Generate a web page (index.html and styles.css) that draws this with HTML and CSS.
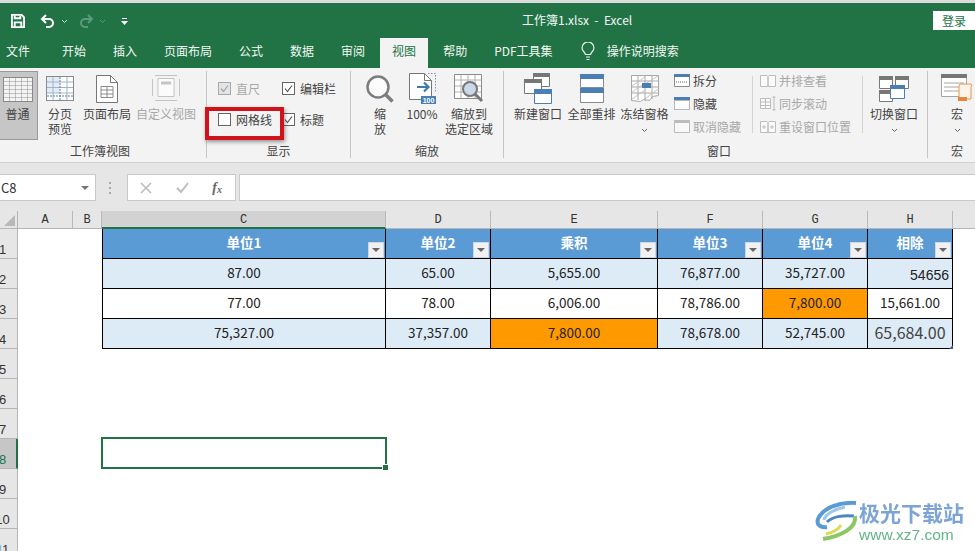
FILE: index.html
```html
<!DOCTYPE html>
<html lang="zh-CN">
<head>
  <meta charset="UTF-8">
  <title>工作簿1.xlsx - Excel</title>
  <link rel="stylesheet" href="styles.css">
</head>
<body>
  <div class="app">
    <!-- title bar -->
    <header class="titlebar">
      <div class="qat">
        <svg class="qat-save" width="14" height="14" viewBox="0 0 15 15" fill="none" stroke="#fff" stroke-width="2"><path d="M1 1h10.500l2.500 2.500V14H1z"/><path d="M4 1.500v3h6v-3M4 14V9h7v5"/></svg>
        <svg class="qat-undo" width="15" height="14" viewBox="0 0 15 14" fill="none" stroke="#fff" stroke-width="2"><path d="M6 1 2 5l4 4"/><path d="M2 5h7a4 4 0 0 1 0 8H6"/></svg>
        <svg class="qat-chev" width="5" height="3" viewBox="0 0 5 3" fill="none" stroke="#d5e5db"><path d="M0 0l2.500 2.500L5 0"/></svg>
        <svg class="qat-redo" width="15" height="14" viewBox="0 0 15 14" fill="none" stroke="#5c9a7b" stroke-width="2"><path d="M9 1l4 4-4 4"/><path d="M13 5H6a4 4 0 0 0 0 8h3"/></svg>
        <svg class="qat-chev2" width="5" height="3" viewBox="0 0 5 3" fill="none" stroke="#5c9a7b"><path d="M0 0l2.500 2.500L5 0"/></svg>
        <svg class="qat-more" width="7" height="7" viewBox="0 0 7 7" fill="#fff"><path d="M1 0h5v1H1zM0 3h7L3.500 7z"/></svg>
      </div>
      <div class="doc-title">工作簿1.xlsx&nbsp; -&nbsp; Excel</div>
      <div class="login">登录</div>
    </header>

    <!-- tabs -->
    <nav class="tabs">
      <span class="tab first">文件</span>
      <span class="tab">开始</span>
      <span class="tab">插入</span>
      <span class="tab">页面布局</span>
      <span class="tab">公式</span>
      <span class="tab">数据</span>
      <span class="tab">审阅</span>
      <span class="tab active">视图</span>
      <span class="tab">帮助</span>
      <span class="tab">PDF工具集</span>
      <svg class="bulb" width="14" height="19" viewBox="0 0 14 19" fill="none" stroke="#e8f0eb" stroke-width="1.200"><path d="M4.500 12.500C4 10 1 9 1 6a6 6 0 0 1 12 0c0 3-3 4-3.500 6.500z"/><path d="M5 15h4M5.500 17.500h3"/></svg>
      <span class="tab search">操作说明搜索</span>
    </nav>

    <!-- ribbon -->
    <section class="ribbon">
      <div class="group g-views">
        <div class="group-main">
          <div class="btn btn-normal w44">
            <div class="btn-icon">
              <svg width="30" height="25" viewBox="0 0 30 25"><defs><pattern id="cellgrid" width="6" height="4" patternUnits="userSpaceOnUse"><path d="M6 0H0V4" fill="none" stroke="#8f8f8f" stroke-width="1"/></pattern></defs><rect width="30" height="25" fill="#f4f4f4"/><rect width="30" height="25" fill="url(#cellgrid)"/><rect x=".5" y=".5" width="29" height="24" fill="none" stroke="#8a8a8a"/></svg>
            </div>
            <div class="btn-text">普通</div>
          </div>
          <div class="btn w44">
            <div class="btn-icon">
              <svg width="28" height="25" viewBox="0 0 28 25"><rect x=".5" y=".5" width="27" height="24" fill="#fff" stroke="#8a8a8a"/><path d="M1 1h13v16H1z" fill="#e3ecf6"/><path d="M1 6h26M1 11.500h26M1 17h26M7 1v23M21 1v23" stroke="#9fb2c8" fill="none"/><path d="M14 1v23M1 20h26" stroke="#5a7ea6" stroke-dasharray="2 1" fill="none"/></svg>
            </div>
            <div class="btn-text">分页<br>预览</div>
          </div>
          <div class="btn w50">
            <div class="btn-icon">
              <svg width="22" height="28" viewBox="0 0 22 28" fill="none" stroke="#777"><path d="M.5.500h14l7 7v20H.5z" fill="#fff"/><path d="M14.500.500v7h7"/><path d="M5 11.500h12v11H5zM5 15h12M5 19h12M11 11.500v11" stroke="#8a8a8a"/></svg>
            </div>
            <div class="btn-text">页面布局</div>
          </div>
          <div class="btn w68 off">
            <div class="btn-icon">
              <svg width="28" height="27" viewBox="0 0 28 27" fill="none" stroke="#c4c4c4"><path d="M6 3.500h16v18H6z" fill="#fbfbfb"/><path d="M9 8h10" stroke-width="3"/><path d="M.5 4v17M27.500 4v17M3 .5h22M3 25.500h22"/></svg>
            </div>
            <div class="btn-text">自定义视图</div>
          </div>
        </div>
        <div class="group-label">工作簿视图</div>
      </div>

      <div class="group g-show">
        <div class="group-main checks">
          <label class="check off"><span class="box on"><svg width="11" height="11" viewBox="0 0 11 11" fill="none" stroke="#a5a5a5" stroke-width="1.200"><path d="M2 5.500l2.500 3L9 2.500"/></svg></span>直尺</label>
          <label class="check"><span class="box"><svg width="11" height="11" viewBox="0 0 11 11" fill="none" stroke="#555" stroke-width="1.100"><path d="M2 5.500l2.500 3L9 2.500"/></svg></span>编辑栏</label>
          <label class="check"><span class="box"></span>网格线</label>
          <label class="check"><span class="box"><svg width="11" height="11" viewBox="0 0 11 11" fill="none" stroke="#555" stroke-width="1.100"><path d="M2 5.500l2.500 3L9 2.500"/></svg></span>标题</label>
        </div>
        <div class="group-label">显示</div>
        <div class="red-mark"></div>
      </div>

      <div class="group g-zoom">
        <div class="group-main">
          <div class="btn w34">
            <div class="btn-icon">
              <svg width="28" height="28" viewBox="0 0 28 28" fill="none"><circle cx="12" cy="12" r="10.500" fill="#fcfcfc" stroke="#7d7d7d" stroke-width="2.500"/><path d="M19.500 19.500l7 7" stroke="#7d7d7d" stroke-width="3.500"/></svg>
            </div>
            <div class="btn-text">缩<br>放</div>
          </div>
          <div class="btn w50">
            <div class="btn-icon">
              <svg width="27" height="31" viewBox="0 0 27 31" fill="none"><path d="M.5.500h15l7 7v19H.5z" fill="#fff" stroke="#777"/><path d="M15.500.500v7h7" stroke="#777"/><path d="M19 .5h7.500v18" stroke="#7a98ba" stroke-dasharray="1.500 1.500"/><path d="M8 14h11M15 9.500l4.500 4.500-4.500 4.500" stroke="#3f78b0" stroke-width="2.200"/><rect x="12" y="23" width="15" height="8" fill="#4a7fb5"/><text x="19.500" y="30" class="badge">100</text></svg>
            </div>
            <div class="btn-text">100%</div>
          </div>
          <div class="btn w44">
            <div class="btn-icon">
              <svg width="30" height="29" viewBox="0 0 30 29" fill="none"><path d="M.5.500h27v24H.5z" fill="#fff" stroke="#8a8a8a"/><path d="M1 6h26M1 12h26M1 18h26M7 1v23M14 1v23M21 1v23" stroke="#b0b0b0"/><circle cx="16" cy="15" r="7" fill="#c9d9ea" stroke="#777" stroke-width="2"/><path d="M21 20l7 7" stroke="#777" stroke-width="3"/></svg>
            </div>
            <div class="btn-text">缩放到<br>选定区域</div>
          </div>
        </div>
        <div class="group-label">缩放</div>
      </div>

      <div class="group g-window">
        <div class="group-main">
          <div class="btn w54">
            <div class="btn-icon">
              <svg width="28" height="31" viewBox="0 0 28 31" fill="none" stroke="#777"><path d="M9.500.500h16v13h-16z" fill="#fff"/><path d="M9 0h17v4H9z" fill="#777" stroke="none"/><path d="M.5 6.500h17v14H.5z" fill="#fff"/><path d="M0 6h18v4H0z" fill="#777" stroke="none"/><path d="M10.500 16.500h17v14h-17z" fill="#fff" stroke="#4a7fb5"/><path d="M10 16h18v5H10z" fill="#4a7fb5" stroke="none"/></svg>
            </div>
            <div class="btn-text">新建窗口</div>
          </div>
          <div class="btn w53">
            <div class="btn-icon">
              <svg width="24" height="29" viewBox="0 0 24 29" fill="none" stroke="#8a8a8a"><path d="M.5.500h23v13H.5zM.5 15.500h23v13H.5z" fill="#fff"/><path d="M0 0h24v5H0zM0 14h24v5H0z" fill="#4a7fb5" stroke="none"/></svg>
            </div>
            <div class="btn-text">全部重排</div>
          </div>
          <div class="btn w53">
            <div class="btn-icon">
              <svg width="28" height="27" viewBox="0 0 28 27" fill="none" stroke="#a9a9a9"><path d="M.5.500h27v20l-6 1-3 4-6-1-3 2-9-1z" fill="#fff"/><path d="M1 6h26M1 12h26M1 18h26M7 1v24M14 1v25M21 1v23"/><path d="M1 11L14 2M1 17l13-9M14 9l13-8M14 24L27 14M1 24l13-9" stroke="#c4c4c4"/><path d="M11 8h9v5h-9z" fill="#4a7fb5" stroke="none"/></svg>
            </div>
            <div class="btn-text">冻结窗格</div>
            <svg class="chev" width="5" height="3" viewBox="0 0 5 3" fill="none" stroke="#666"><path d="M0 0l2.500 2.500L5 0"/></svg>
          </div>
          <div class="small-col sc-1">
            <div class="small"><svg width="16" height="13" viewBox="0 0 16 13" fill="none" stroke="#8a8a8a"><path d="M.5.500h15v12H.5z" fill="#fff"/><path d="M0 0h16v3H0z" fill="#4a7fb5" stroke="none"/><path d="M2 8h12" stroke="#666" stroke-dasharray="1 1"/></svg>拆分</div>
            <div class="small"><svg width="16" height="13" viewBox="0 0 16 13" fill="none"><path d="M.5 3.500h15v9H.5z" fill="#fff" stroke="#777" stroke-dasharray="1 1"/><path d="M0 0h16v3H0z" fill="#4a7fb5"/></svg>隐藏</div>
            <div class="small off"><svg width="16" height="13" viewBox="0 0 16 13" fill="none" stroke="#bcbcbc"><path d="M.5.500h15v12H.5z" fill="#f8f8f8"/><path d="M0 0h16v3H0z" fill="#bcbcbc" stroke="none"/></svg>取消隐藏</div>
          </div>
          <i class="vsep"></i>
          <div class="small-col sc-2 off">
            <div class="small"><svg width="16" height="13" viewBox="0 0 16 13" fill="none" stroke="#bcbcbc"><path d="M.5 1.500h6.500l1 1v10H.5zM8 2.500l1-1h6.500v11H8z" fill="#fbfbfb"/></svg>并排查看</div>
            <div class="small"><svg width="16" height="15" viewBox="0 0 16 15" fill="none" stroke="#bcbcbc"><path d="M.5 2.500h10v10H.5zM5.500 2.500v10M.5 6h10M.5 9.500h10" fill="#fbfbfb"/><path d="M14 0v15M12.500 2L14 .5 15.500 2M12.500 13l1.500 1.500 1.500-1.500"/></svg>同步滚动</div>
            <div class="small"><svg width="16" height="13" viewBox="0 0 16 13" fill="none" stroke="#bcbcbc"><path d="M.5 1.500h6.500l1 1v10H.5zM8 2.500l1-1h6.500v11H8z" fill="#fbfbfb"/><path d="M2 7h4M4 5v4M10 7h4M12 5v4"/></svg>重设窗口位置</div>
          </div>
          <i class="vsep"></i>
          <div class="btn w62">
            <div class="btn-icon">
              <svg width="30" height="26" viewBox="0 0 30 26" fill="none" stroke="#777"><path d="M.5.500h13v12H.5zM16.500.500h13v12h-13zM.5 14.500h13v11H.5z" fill="#fff"/><path d="M0 0h14v4H0zM16 0h14v4H16zM0 14h14v4H0z" fill="#777" stroke="none"/><path d="M11.500 9.500h14v13h-14z" fill="#fff" stroke="#4a7fb5"/><path d="M11 9h15v4H11z" fill="#4a7fb5" stroke="none"/></svg>
            </div>
            <div class="btn-text">切换窗口</div>
            <svg class="chev" width="5" height="3" viewBox="0 0 5 3" fill="none" stroke="#666"><path d="M0 0l2.500 2.500L5 0"/></svg>
          </div>
        </div>
        <div class="group-label">窗口</div>
      </div>

      <div class="group g-macro">
        <div class="group-main">
          <div class="btn w58">
            <div class="btn-icon">
              <svg width="32" height="30" viewBox="0 0 32 30" fill="none" stroke="#a5a5a5"><path d="M.5.500h25v22H.5z" fill="#fff"/><path d="M0 0h26v4H0z" fill="#777" stroke="none"/><path d="M3 9h20M3 13h20M3 17h20"/><path d="M18 24V12a2 2 0 0 1 2-2h10a2 2 0 0 1 0 3v12h-10z" fill="#fdf3e8" stroke="#e8964a"/><path d="M17 23h9v4h-9z" fill="#e8833a" stroke="none"/></svg>
            </div>
            <div class="btn-text">宏</div>
            <svg class="chev" width="5" height="3" viewBox="0 0 5 3" fill="none" stroke="#666"><path d="M0 0l2.500 2.500L5 0"/></svg>
          </div>
        </div>
        <div class="group-label">宏</div>
      </div>
    </section>

    <!-- formula bar -->
    <section class="formula">
      <div class="namebox">
        <span>C8</span>
        <i class="tri"></i>
      </div>
      <div class="dots"></div>
      <div class="fx-box">
        <svg width="12" height="12" viewBox="0 0 12 12" fill="none" stroke="#bdbdbd" stroke-width="1.600"><path d="M1 1l10 10M11 1L1 11"/></svg>
        <svg width="13" height="11" viewBox="0 0 13 11" fill="none" stroke="#bdbdbd" stroke-width="2"><path d="M1 6l4 4 7-9"/></svg>
        <span class="fx">f<sub>x</sub></span>
      </div>
      <div class="fx-input"></div>
    </section>

    <!-- sheet -->
    <main class="sheet">
      <div class="corner"><i></i></div>
      <div class="col">A</div>
      <div class="col">B</div>
      <div class="col sel-col">C</div>
      <div class="col">D</div>
      <div class="col">E</div>
      <div class="col">F</div>
      <div class="col">G</div>
      <div class="col">H</div>
      <div class="col end"></div>

      <div class="row-num">1</div>
      <div class="cell head from-c">单位1<i class="filter"></i></div>
      <div class="cell head">单位2<i class="filter"></i></div>
      <div class="cell head">乘积<i class="filter"></i></div>
      <div class="cell head">单位3<i class="filter"></i></div>
      <div class="cell head">单位4<i class="filter"></i></div>
      <div class="cell head">相除<i class="filter"></i></div>

      <div class="row-num">2</div>
      <div class="cell tint from-c">87.00</div>
      <div class="cell tint">65.00</div>
      <div class="cell tint">5,655.00</div>
      <div class="cell tint">76,877.00</div>
      <div class="cell tint">35,727.00</div>
      <div class="cell tint plain">54656</div>

      <div class="row-num">3</div>
      <div class="cell from-c">77.00</div>
      <div class="cell">78.00</div>
      <div class="cell">6,006.00</div>
      <div class="cell">78,786.00</div>
      <div class="cell orange">7,800.00</div>
      <div class="cell">15,661.00</div>

      <div class="row-num">4</div>
      <div class="cell tint from-c">75,327.00</div>
      <div class="cell tint">37,357.00</div>
      <div class="cell orange">7,800.00</div>
      <div class="cell tint">78,678.00</div>
      <div class="cell tint">52,745.00</div>
      <div class="cell tint big">65,684.00</div>

      <div class="row-num">5</div>
      <div class="row-num">6</div>
      <div class="row-num">7</div>
      <div class="row-num sel-row">8</div>
      <div class="selection"><i></i></div>
      <div class="row-num">9</div>
      <div class="row-num">10</div>
      <div class="row-num">11</div>
    </main>

    <!-- watermark -->
    <div class="watermark">
      <svg width="44" height="40" viewBox="0 0 44 40" fill="none">
        <path d="M41 2C26 1 8 6 3 18c-2 6 3 9 9 8" stroke="#5b9bd5" stroke-width="4"/>
        <path d="M30 6C20 8 10 13 9 19" stroke="#9cc9e8" stroke-width="3"/>
        <path d="M12 21c6-6 18-7 27-6" stroke="#4a86c5" stroke-width="3"/>
        <path d="M40 15c2 12-14 20-32 23" stroke="#8cc665" stroke-width="4"/>
        <path d="M26 24c-3 5-10 8-15 9" stroke="#d9dc5a" stroke-width="3"/>
      </svg>
      <div class="wm-text">
        <div class="wm-cn">极光下载站</div>
        <div class="wm-url">www.xz7.com</div>
      </div>
    </div>
  </div>
</body>
</html>
```

FILE: styles.css
```css
* {
  box-sizing: border-box;
}
html, body {
  margin: 0;
  height: 100%;
  overflow: hidden;
}
body {
  font-family: "Noto Sans CJK SC", "Noto Sans", sans-serif;
  font-size: 12px;
  color: #444;
  background: #fff;
}
.app {
  position: relative;
  width: 975px;
  height: 551px;
  overflow: hidden;
}

/* title bar */
.titlebar {
  height: 38px;
  border-top: 3px solid #dcdcdc;
  background: #217346;
  color: #fff;
  display: flex;
  align-items: center;
  position: relative;
}
.qat {
  display: flex;
  align-items: center;
  padding-left: 11px;
  margin-top: 1px;
}
.qat-undo { margin-left: 15px; }
.qat-chev { margin-left: 7px; }
.qat-redo { margin-left: 12px; }
.qat-chev2 { margin-left: 6px; }
.qat-more { margin-left: 16px; }
.doc-title {
  position: absolute;
  left: 522px;
  top: 7px;
  line-height: 20px;
  color: #f2f7f4;
}
.login {
  margin-left: auto;
  margin-top: -1px;
  width: 42px;
  height: 19px;
  line-height: 19px;
  text-align: center;
  background: #fff;
  color: #217346;
}

/* tabs */
.tabs {
  height: 30px;
  background: #217346;
  color: #f2f7f4;
  display: flex;
  align-items: stretch;
}
.tab {
  padding: 0 12px;
  margin-right: 3px;
  line-height: 25px;
}
.tab.first {
  padding-left: 6px;
  margin-right: 8px;
}
.tab.active {
  background: #f3f3f3;
  color: #217346;
}
.bulb {
  margin: 4px 0 0 13px;
}
.tab.search {
  padding-left: 12px;
}

/* ribbon */
.ribbon {
  height: 95px;
  padding-top: 3px;
  background: #f3f3f3;
  border-bottom: 1px solid #d2d2d2;
  display: flex;
  align-items: flex-start;
}
.group {
  position: relative;
  height: 87px;
  border-right: 1px solid #c6c6c6;
  flex: none;
}
.group-main {
  height: 69px;
  display: flex;
}
.group-label {
  padding-top: 3px;
  line-height: 15px;
  text-align: center;
  color: #444;
}
.g-views { width: 213px; margin-left: -6px; }
.g-show { width: 144px; }
.g-zoom { width: 153px; padding-left: 12px; }
.g-zoom .group-label { margin-left: -12px; }
.g-window { width: 424px; padding-left: 7px; }
.g-macro { width: 58px; border-right: 0; }

.btn {
  flex: none;
  display: flex;
  flex-direction: column;
  align-items: center;
  color: #444;
}
.btn-icon {
  height: 35px;
  display: flex;
  align-items: center;
  justify-content: center;
}
.btn-text {
  line-height: 15px;
  text-align: center;
  white-space: nowrap;
}
.btn .chev {
  margin-top: 8px;
}
.off, .off .btn-text {
  color: #a8a8a8;
}
.w34 { width: 34px; }
.w44 { width: 44px; }
.w50 { width: 50px; }
.w53 { width: 53px; }
.w54 { width: 54px; }
.w58 { width: 58px; }
.w62 { width: 62px; }
.w68 { width: 68px; }
.btn-normal {
  padding-left: 4px;
  background: #c6c6c6;
  border: 1px solid #9a9a9a;
  border-left: 0;
}
.btn-normal .btn-icon {
  height: 34px;
}

/* 显示 checkboxes */
.checks {
  display: grid;
  grid-template-columns: 64px 1fr;
  grid-auto-rows: 31px;
  padding: 2px 0 0 11px;
}
.check {
  display: flex;
  align-items: center;
  gap: 5px;
}
.box {
  width: 13px;
  height: 13px;
  border: 1px solid #666;
  background: #fff;
  display: flex;
  align-items: center;
  justify-content: center;
}
.box.on {
  background: #e4e4e4;
  border-color: #a8a8a8;
}
.red-mark {
  position: absolute;
  left: -2px;
  top: 36px;
  width: 79px;
  height: 33px;
  border: 4px solid #d0121b;
  box-shadow: 1px 2px 4px rgba(0, 0, 0, .4);
}

/* small ribbon rows */
.small-col {
  flex: none;
  display: flex;
  flex-direction: column;
  margin-top: -2px;
}
.small {
  height: 23px;
  display: flex;
  align-items: center;
  gap: 3px;
  white-space: nowrap;
}
.sc-1 {
  width: 81px;
  padding-left: 3px;
}
.sc-2 {
  width: 109px;
  padding-left: 7px;
}
.vsep {
  flex: none;
  width: 1px;
  height: 57px;
  margin-top: 5px;
  background: #d4d4d4;
}
.badge {
  font-family: "Liberation Sans", sans-serif;
  font-size: 7px;
  font-weight: 700;
  fill: #fff;
  text-anchor: middle;
}

/* formula bar */
.formula {
  height: 48px;
  background: #e6e6e6;
  padding-top: 11px;
  display: flex;
  align-items: flex-start;
}
.namebox {
  width: 96px;
  height: 27px;
  background: #fff;
  border: 1px solid #c9c9c9;
  border-left: 0;
  display: flex;
  align-items: center;
  justify-content: space-between;
  padding: 0 6px 0 1px;
  font-size: 13px;
  color: #333;
}
.tri {
  width: 0;
  height: 0;
  border-left: 4px solid transparent;
  border-right: 4px solid transparent;
  border-top: 4px solid #777;
}
.dots {
  width: 2px;
  height: 12px;
  margin: 8px 16px 0 13px;
  background: repeating-linear-gradient(#aaa 0 2px, transparent 2px 5px);
}
.fx-box {
  width: 109px;
  height: 27px;
  margin-right: 3px;
  background: #fff;
  border: 1px solid #c9c9c9;
  display: flex;
  align-items: center;
  justify-content: space-between;
  padding: 0 13px 0 12px;
}
.fx {
  font-family: "Liberation Serif", serif;
  font-style: italic;
  font-size: 14px;
  font-weight: 700;
  color: #666;
}
.fx sub {
  font-size: 10px;
  vertical-align: -1px;
}
.fx-input {
  flex: 1;
  height: 27px;
  background: #fff;
  border: 1px solid #c9c9c9;
  border-right: 0;
}

/* sheet */
.sheet {
  display: grid;
  grid-template-columns: 18px 55px 29px 284px 105px 167px 105px 105px 85px 1fr;
  grid-template-rows: 18px repeat(10, 30px) 24px;
  background: #fff;
}
.corner {
  background: #e6e6e6;
  border-right: 1px solid #b5b5b5;
  border-bottom: 1px solid #b5b5b5;
  position: relative;
}
.corner i {
  position: absolute;
  right: 2px;
  bottom: 2px;
  width: 0;
  height: 0;
  border-left: 11px solid transparent;
  border-bottom: 11px solid #b8b8b8;
}
.col {
  background: #e6e6e6;
  border-right: 1px solid #b9b9b9;
  border-bottom: 1px solid #b5b5b5;
  font-family: "Liberation Mono", monospace;
  font-size: 12px;
  line-height: 19px;
  text-align: center;
  color: #333;
}
.col.end {
  border-right: 0;
}
.sel-col {
  background: #d2d2d2;
  border-bottom: 2px solid #217346;
}
.row-num {
  grid-column: 1;
  background: #e6e6e6;
  border-right: 1px solid #b5b5b5;
  border-bottom: 1px solid #b5b5b5;
  overflow: hidden;
  display: flex;
  justify-content: center;
  padding: 13px 12px 0 0;
  font-family: "Liberation Sans", sans-serif;
  font-size: 13px;
  line-height: 16px;
  color: #333;
}
.sel-row {
  background: #c6c6c6;
  border-right: 2px solid #217346;
  padding-right: 11px;
  color: #217346;
}
.cell {
  position: relative;
  border-right: 1px solid #000;
  border-bottom: 1px solid #000;
  display: flex;
  align-items: center;
  justify-content: center;
  padding-bottom: 4px;
  font-size: 13.500px;
  color: #222;
}
.from-c {
  grid-column: 4;
  border-left: 1px solid #000;
}
.head {
  background: #5b9bd5;
  color: #fff;
  font-weight: 700;
}
.tint {
  background: #ddebf7;
}
.orange {
  background: #ff9900;
}
.plain {
  justify-content: flex-end;
  padding: 3px 3px 0 0;
  font-family: "Liberation Sans", sans-serif;
  font-size: 14px;
}
.big {
  font-size: 16px;
  color: #444;
}
.big::after {
  content: "";
  position: absolute;
  right: -1px;
  bottom: -1px;
  width: 0;
  height: 0;
  border-left: 4px solid transparent;
  border-bottom: 4px solid #3d5a99;
}
.filter {
  position: absolute;
  right: 1px;
  bottom: 0;
  width: 16px;
  height: 16px;
  background: #f1f1f1;
  border: 1px solid #cfd8e2;
}
.filter::after {
  content: "";
  position: absolute;
  left: 3px;
  top: 5px;
  width: 0;
  height: 0;
  border-left: 4px solid transparent;
  border-right: 4px solid transparent;
  border-top: 4px solid #666;
}
.selection {
  grid-column: 4;
  grid-row: 9;
  margin: -2px -1px 0 -1px;
  border: 2px solid #217346;
  position: relative;
}
.selection i {
  position: absolute;
  right: -3px;
  bottom: -3px;
  width: 5px;
  height: 5px;
  background: #217346;
  outline: 1px solid #fff;
}

/* watermark */
.watermark {
  position: absolute;
  left: 815px;
  top: 501px;
  display: flex;
  gap: 0;
  background: rgba(255, 255, 255, .85);
  filter: blur(.4px);
}
.wm-cn {
  font-size: 21px;
  font-weight: 700;
  line-height: 23px;
  color: #7ca5d6;
  white-space: nowrap;
}
.wm-url {
  font-family: "Liberation Sans", sans-serif;
  font-size: 15.500px;
  line-height: 22px;
  color: #63b488;
}
```
